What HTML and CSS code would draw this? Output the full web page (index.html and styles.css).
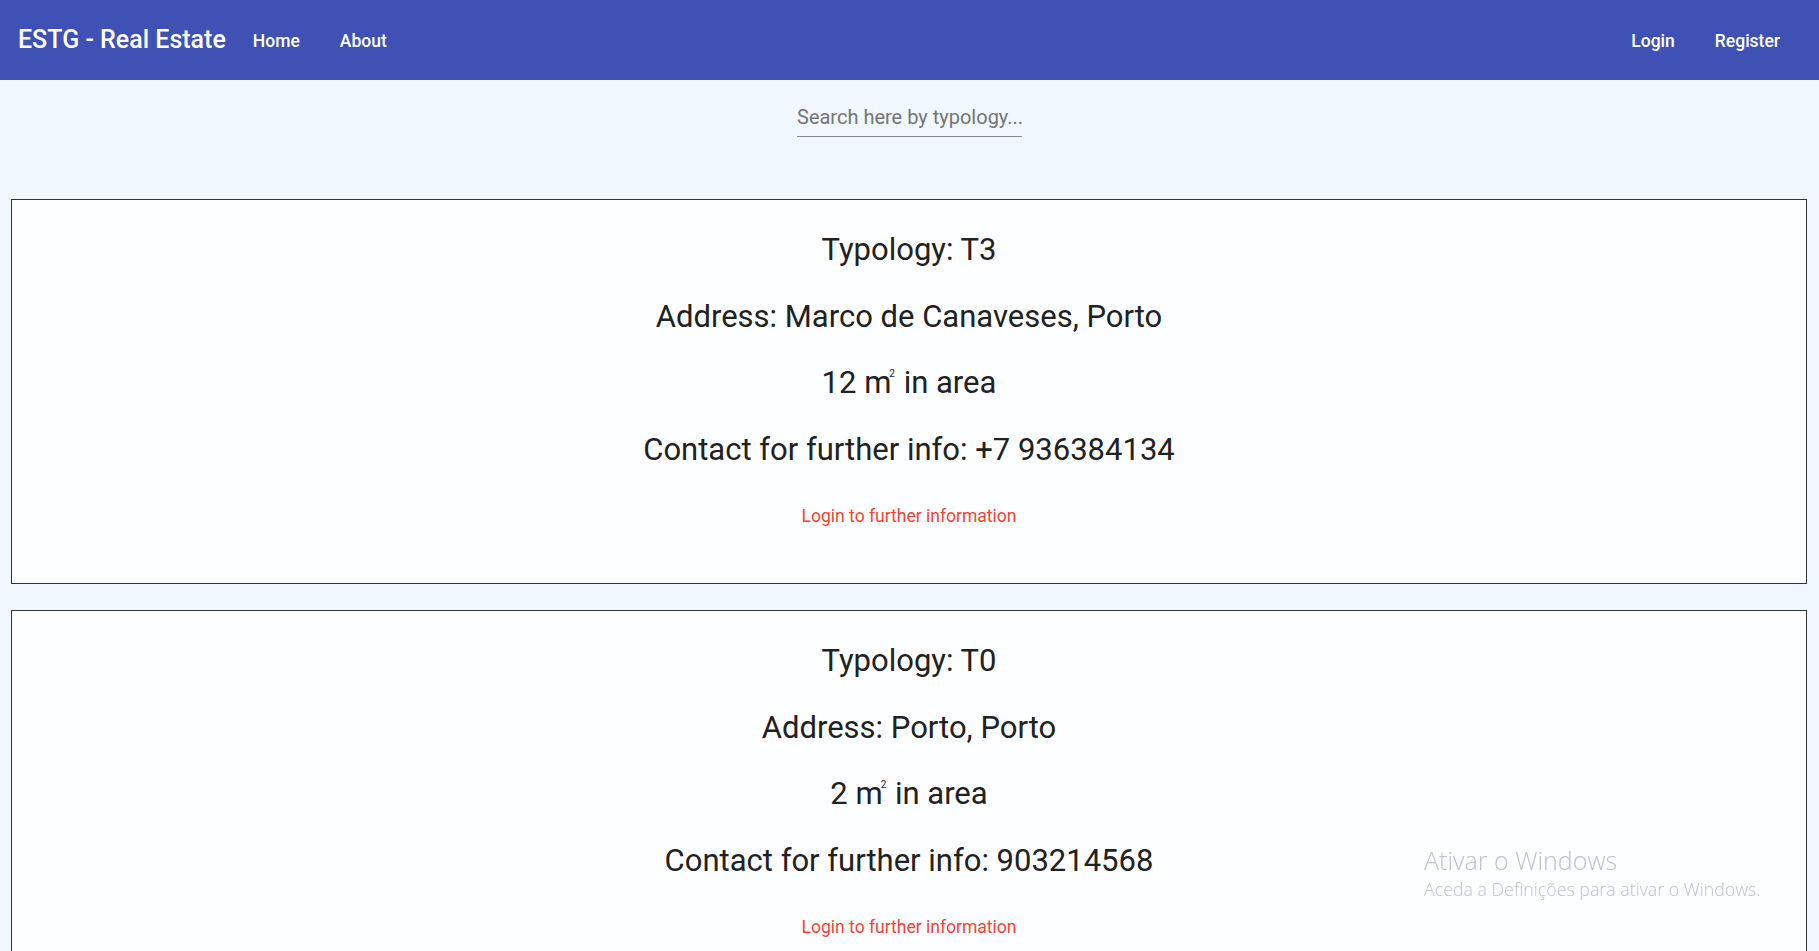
FILE: index.html
```html
<!DOCTYPE html>
<html>
<head>
<meta charset="utf-8">
<link rel="stylesheet" href="styles.css">
</head>
<body>
<header class="navbar">
  <span class="brand">ESTG - Real Estate</span>
  <a class="nav-link" href="#">Home</a>
  <a class="nav-link" href="#">About</a>
  <span class="spacer"></span>
  <a class="nav-link" href="#">Login</a>
  <a class="nav-link" href="#">Register</a>
</header>
<div class="search-row">
  <input class="search" type="text" placeholder="Search here by typology...">
</div>
<main class="list">
  <section class="card">
    <p class="line">Typology: T3</p>
    <p class="line">Address: Marco de Canaveses, Porto</p>
    <p class="line">12 m<span class="sq">2</span> in area</p>
    <p class="line">Contact for further info: +7 936384134</p>
    <a class="more" href="#">Login to further information</a>
  </section>
  <section class="card">
    <p class="line">Typology: T0</p>
    <p class="line">Address: Porto, Porto</p>
    <p class="line">2 m<span class="sq">2</span> in area</p>
    <p class="line">Contact for further info: 903214568</p>
    <a class="more" href="#">Login to further information</a>
  </section>
</main>
<div class="watermark">
  <div class="wm-title">Ativar o Windows</div>
  <div class="wm-sub">Aceda a Definições para ativar o Windows.</div>
</div>
</body>
</html>
```
FILE: styles.css
```css
html, body {
  margin: 0;
  padding: 0;
  background: #f0f7ff;
  font-family: Roboto, "Liberation Sans", sans-serif;
  color: #212121;
  overflow: hidden;
}
.navbar {
  height: 80px;
  background: #3f51b5;
  display: flex;
  align-items: center;
  padding: 0 19px 0 18px;
  color: #fff;
}
.brand {
  font-size: 25px;
  font-weight: 500;
  margin-right: 7px;
  margin-top: -2px;
}
.nav-link {
  color: #fff;
  text-decoration: none;
  font-size: 17.5px;
  font-weight: 500;
  padding: 0 20px;
  margin-top: 1px;
}
.spacer { flex: 1; }
.search-row {
  display: flex;
  justify-content: center;
  padding-top: 25px;
  height: 95px;
  box-sizing: border-box;
}
.search {
  width: 225px;
  border: none;
  border-bottom: 1px solid #8a8a8a;
  background: transparent;
  font-family: Roboto, "Liberation Sans", sans-serif;
  font-size: 20px;
  padding: 0 0 7px 0;
  outline: none;
  height: 32px;
  box-sizing: border-box;
}
.search::placeholder { color: #757575; }
.list {
  display: flex;
  flex-direction: column;
  gap: 26px;
  padding: 24px 12px 0 11px;
}
.card {
  border: 1px solid #333;
  background: #fdfeff;
  text-align: center;
  padding: 32px 0 55.5px;
}
.line {
  font-size: 31px;
  line-height: 36px;
  margin: 0 0 30.7px;
}
.sq {
  font-size: 10px;
  line-height: 0;
  position: relative;
  top: -16px;
  margin-left: -2px;
  margin-right: 1px;
}
.more {
  display: block;
  color: #f44336;
  text-decoration: none;
  font-size: 17.5px;
  line-height: 21px;
  margin-top: 38.4px;
}
.watermark {
  position: fixed;
  left: 1424px;
  top: 844.6px;
  color: #c2c2c2;
  font-family: "Open Sans", "Noto Sans", sans-serif;
}
.wm-title { font-size: 25px; line-height: 30px; font-weight: 300; }
.wm-sub { font-size: 17.8px; line-height: 22px; font-weight: 300; margin-top: 3px; }
```
